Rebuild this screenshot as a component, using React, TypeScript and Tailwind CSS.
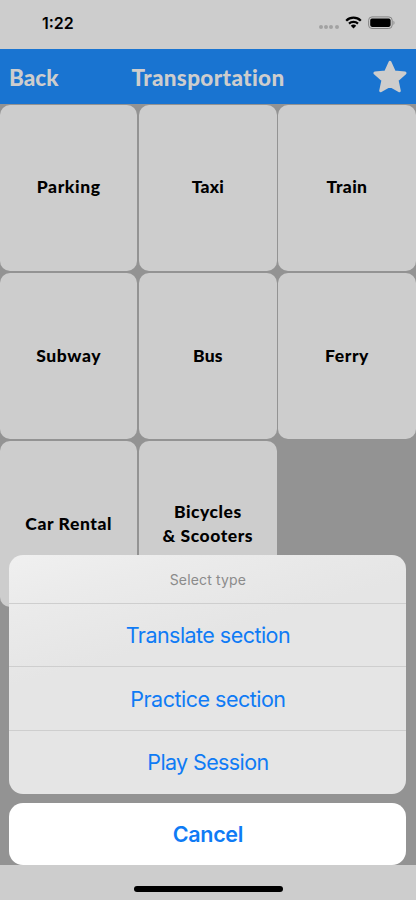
import clsx from "clsx"

const CATEGORIES = [
  { id: "parking", lines: ["Parking"], tracking: "tracking-[0.6px]" },
  { id: "taxi", lines: ["Taxi"], tracking: "tracking-[0.2px]" },
  { id: "train", lines: ["Train"], tracking: "tracking-[0.4px]" },
  { id: "subway", lines: ["Subway"], tracking: "tracking-[0.6px]" },
  { id: "bus", lines: ["Bus"], tracking: "tracking-[0.2px]" },
  { id: "ferry", lines: ["Ferry"], tracking: "tracking-[0.6px]" },
  { id: "car-rental", lines: ["Car Rental"], tracking: "tracking-[0.6px]" },
  { id: "bicycles", lines: ["Bicycles", "& Scooters"], tracking: "tracking-[0.55px]" },
]

const ACTIONS = [
  { label: "Translate section", tracking: "tracking-[-0.54px]" },
  { label: "Practice section", tracking: "tracking-[-0.5px]" },
  { label: "Play Session", tracking: "tracking-[-0.62px]" },
]

function StatusBar() {
  return (
    <div className="flex h-[49px] shrink-0 items-start justify-between bg-[#cdcdcd] pl-[42px] pr-[20.5px]">
      <span className="pt-[13px] font-['Inter',sans-serif] text-[16px] font-semibold leading-[20px] text-black">
        1:22
      </span>
      <div className="flex items-start pt-[16px]">
        <div className="flex gap-[1.5px] pt-[9px]">
          {[0, 1, 2, 3].map((dot) => (
            <span key={dot} className="size-[3.8px] rounded-full bg-[#a2a2a2]" />
          ))}
        </div>
        <svg className="ml-[6px] h-[13px] w-[17px]" viewBox="0 0 17 13" fill="none">
          <path d="M1.2 4.7C5.3.7 11.7.7 15.8 4.7" stroke="#000" strokeWidth="2.3" />
          <path d="M4 7.6C6.5 5.2 10.5 5.2 13 7.6" stroke="#000" strokeWidth="2.2" />
          <path d="M5.8 9.7C7.3 8.2 9.7 8.2 11.2 9.7L8.5 12.5Z" fill="#000" />
        </svg>
        <svg className="ml-[6px] h-[13px] w-[28px]" viewBox="0 0 28 13">
          <rect x="0.6" y="0.9" width="23.6" height="11.6" rx="3.4" fill="none" stroke="#858585" />
          <rect x="2.2" y="2.6" width="20.4" height="8.3" rx="1.8" />
          <path d="M25.5 4.8c1.3.5 1.3 3.6 0 4.1z" fill="#858585" />
        </svg>
      </div>
    </div>
  )
}

function NavBar() {
  return (
    <div className="grid h-[55px] shrink-0 grid-cols-[1fr_auto_1fr] items-center bg-[#1974d1] pl-[9px] pr-[9px] font-['Lato',sans-serif] text-[22.5px] font-black leading-[30px] text-[#cdcdcd]">
      <span className="pt-[2px]">Back</span>
      <span className="pt-[2px] tracking-[0.35px]">Transportation</span>
      <svg className="h-[34px] w-[34px] justify-self-end" viewBox="0 0 34 34">
        <path
          d="M17 2.4 21.4 12 32 13.1 24.1 20.2 26.3 30.8 17 25.5 7.7 30.8 9.9 20.2 2 13.1 12.6 12Z"
          fill="#cdcdcd"
          stroke="#cdcdcd"
          strokeWidth="3"
          strokeLinejoin="round"
        />
      </svg>
    </div>
  )
}

function CategoryGrid() {
  return (
    <div className="grid flex-1 auto-rows-[166.2px] grid-cols-3 content-start gap-x-[1.8px] gap-y-[2.2px] pr-[0.3px] pt-[0.5px]">
      {CATEGORIES.map((category) => (
        <div
          key={category.id}
          className={clsx(
            "flex flex-col items-center justify-center rounded-[10px] bg-[#cdcdcd] pb-[0.6px] font-['Lato',sans-serif] text-[17.5px] font-black leading-[24px] text-black",
            category.tracking,
          )}
        >
          {category.lines.map((line) => (
            <span key={line}>{line}</span>
          ))}
        </div>
      ))}
    </div>
  )
}

function ActionSheet() {
  return (
    <div className="absolute left-[9.4px] right-[9.6px] top-[554.5px] font-['Inter',sans-serif] text-[#0f7bf5]">
      <div className="overflow-hidden rounded-[14px] bg-[#e5e5e5] bg-[linear-gradient(165deg,#f0f0f0_0%,#ebebeb_15%,#e5e5e5_38%)]">
        <div className="flex h-[49px] items-center justify-center border-b border-[#cecece] pt-px text-[14px] tracking-[0.15px] text-[#8b8b8b]">
          Select type
        </div>
        {ACTIONS.map((action, i) => (
          <button
            key={action.label}
            className={clsx(
              "flex w-full items-center justify-center pt-px text-[21.5px]",
              i < ACTIONS.length - 1 ? "h-[63.5px] border-b border-[#cecece]" : "h-[63px]",
              action.tracking,
            )}
          >
            {action.label}
          </button>
        ))}
      </div>
      <button className="mt-[9px] flex h-[62.5px] w-full items-center justify-center rounded-[14px] bg-white pt-px text-[21.5px] font-semibold tracking-[-0.3px]">
        Cancel
      </button>
    </div>
  )
}

export default function App() {
  return (
    <div className="relative flex h-[900px] w-[416px] flex-col overflow-hidden bg-[#939393]">
      <StatusBar />
      <NavBar />
      <CategoryGrid />
      <div className="flex h-[35px] shrink-0 justify-center bg-[#cdcdcd] pt-[21px]">
        <div className="h-[5.5px] w-[149px] rounded-full bg-black" />
      </div>
      <ActionSheet />
    </div>
  )
}
